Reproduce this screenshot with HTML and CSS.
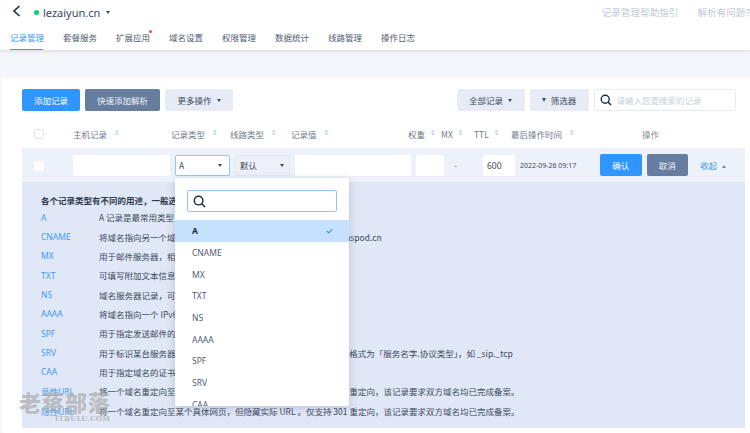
FILE: index.html
```html
<!DOCTYPE html>
<html lang="zh">
<head>
<meta charset="utf-8">
<title>记录管理</title>
<link rel="stylesheet" href="styles.css">
</head>
<body>
<div class="page">
  <header class="header">
    <div class="top">
      <svg class="back" width="8" height="12" viewBox="0 0 8 12"><path d="M6.5 1 1 6l5.5 5" fill="none" stroke="#1f2d3d" stroke-width="1.6"/></svg>
      <span class="dot"></span>
      <span class="domain">lezaiyun.cn</span>
      <span class="caret dark"></span>
      <span class="spacer"></span>
      <span class="toplink">记录管理帮助指引</span>
      <span class="toplink last">解析有问题？</span>
    </div>
    <nav class="tabs">
      <span class="tab active">记录管理</span>
      <span class="tab">套餐服务</span>
      <span class="tab badge">扩展应用</span>
      <span class="tab">域名设置</span>
      <span class="tab">权限管理</span>
      <span class="tab">数据统计</span>
      <span class="tab">线路管理</span>
      <span class="tab">操作日志</span>
    </nav>
  </header>
  <main class="main">
    <section class="card">
      <div class="toolbar">
        <span class="btn primary w58">添加记录</span>
        <span class="btn slate w76">快速添加解析</span>
        <span class="btn soft w68">更多操作<span class="caret dark"></span></span>
        <span class="spacer"></span>
        <span class="btn soft w68">全部记录<span class="caret dark"></span></span>
        <span class="btn soft w59"><span class="caret dark funnel"></span>筛选器</span>
        <div class="search">
          <svg width="12" height="12" viewBox="0 0 12 12"><circle cx="5.2" cy="5.2" r="4" fill="none" stroke="#1f2d3d" stroke-width="1.4"/><path d="m8 8 3 3" stroke="#1f2d3d" stroke-width="1.5"/></svg>
          <span>请输入您要搜索的记录</span>
        </div>
      </div>
      <div class="thead">
        <span class="check"></span>
        <span class="th c-host sort">主机记录</span>
        <span class="th c-type sort">记录类型</span>
        <span class="th c-line sort">线路类型</span>
        <span class="th c-value sort">记录值</span>
        <span class="th c-weight sort">权重</span>
        <span class="th c-mx sort">MX</span>
        <span class="th c-ttl sort">TTL</span>
        <span class="th c-time sort">最后操作时间</span>
        <span class="th c-op">操作</span>
      </div>
      <div class="editrow">
        <span class="check white"></span>
        <span class="field f-host"></span>
        <span class="field f-type focus">A<span class="caret dark"></span></span>
        <span class="field f-line grey">默认<span class="caret dark"></span></span>
        <span class="field f-value"></span>
        <span class="field f-weight"></span>
        <span class="dash">-</span>
        <span class="field f-ttl">600</span>
        <span class="time">2022-09-26 09:17</span>
        <span class="btn primary rowbtn">确认</span>
        <span class="btn slate rowbtn">取消</span>
        <span class="fold">收起<span class="caret up"></span></span>
      </div>
      <div class="detail">
        <p class="dtitle">各个记录类型有不同的用途，一般选择 A 记录或 CNAME 记录即可。</p>
        <dl class="dlist">
          <dt>A</dt><dd>A 记录是最常用类型，将域名指向一个 IPv4 地址，如 8.8.8.8</dd>
          <dt>CNAME</dt><dd>将域名指向另一个域名地址，与其有相同解析，如 https://www.dnspod.cn</dd>
          <dt>MX</dt><dd>用于邮件服务器，相关参数一般由邮件注册商提供</dd>
          <dt>TXT</dt><dd>可填写附加文本信息，常用于域名验证</dd>
          <dt>NS</dt><dd>域名服务器记录，可将指定域名交由其他 DNS 服务商解析管理</dd>
          <dt>AAAA</dt><dd>将域名指向一个 IPv6 地址，如 ff06:0:0:0:0:0:0:c3</dd>
          <dt>SPF</dt><dd>用于指定发送邮件的服务器，是一种开放的电子邮件验证系统</dd>
          <dt>SRV</dt><dd>用于标识某台服务器使用了某个服务，常见于微软系统目录管理 。 格式为「服务名字.协议类型」，如 _sip._tcp</dd>
          <dt>CAA</dt><dd>用于指定域名的证书颁发机构（CA）</dd>
          <dt>显性URL</dt><dd>将一个域名重定向至某个具体网页，并显示实际 URL 。仅支持 301 重定向，该记录要求双方域名均已完成备案。</dd>
          <dt>隐性URL</dt><dd>将一个域名重定向至某个具体网页，但隐藏实际 URL 。仅支持 301 重定向，该记录要求双方域名均已完成备案。</dd>
        </dl>
      </div>
    </section>
  </main>
  <div class="dropdown">
    <div class="ddsearch">
      <svg width="13" height="13" viewBox="0 0 13 13"><circle cx="5.6" cy="5.6" r="4.3" fill="none" stroke="#1f2d3d" stroke-width="1.4"/><path d="m8.8 8.8 3.2 3.2" stroke="#1f2d3d" stroke-width="1.6"/></svg>
    </div>
    <ul class="ddlist">
      <li class="selected">A<svg width="7" height="6" viewBox="0 0 9 7"><path d="M1 3.5 3.5 6 8 1" fill="none" stroke="#3d94f6" stroke-width="1.5"/></svg></li>
      <li>CNAME</li><li>MX</li><li>TXT</li><li>NS</li><li>AAAA</li><li>SPF</li><li>SRV</li><li>CAA</li>
    </ul>
  </div>
  <div class="watermark"><div class="wm-cn">老蒋部落</div><div class="wm-en">ITBULU.COM</div></div>
</div>
</body>
</html>
```
FILE: styles.css
```css
* { box-sizing: border-box; }
html, body { margin: 0; padding: 0; height: 433px; overflow: hidden; }
body { font-family: "Noto Sans CJK SC", "Noto Sans", sans-serif; font-size: 8.5px; color: #495770; background: #f3f6fa; }
.page { position: relative; width: 750px; height: 433px; overflow: hidden; }
.spacer { flex: 1; }

.header { height: 50px; background: #fff; box-shadow: 0 1px 3px rgba(80,100,130,.2); padding-left: 10px; }
.top { height: 28px; display: flex; align-items: center; padding-top: 1px; }
.back { margin: -7px 0 0 3px; }
.dot { width: 5px; height: 5px; border-radius: 50%; background: #0ccb7c; margin: -5px 4px 0 13px; }
.domain { font-family: "Noto Sans", sans-serif; font-size: 11px; color: #3a475c; margin-top: -5px; }
.top > .caret { margin: -5px 0 0 6px; }
.toplink { color: #c3cad5; font-size: 9.6px; margin-top: -6px; margin-right: 19px; white-space: nowrap; }
.toplink.last { margin-right: -5px; }
.tabs { display: flex; gap: 20px; height: 22px; }
.tab { position: relative; width: 33px; white-space: nowrap; line-height: 19px; color: #4f5c72; height: 22px; }
.tab.active { color: #3a97f5; border-bottom: 1px solid #3a97f5; }
.tab.badge::after { content: ""; position: absolute; width: 3px; height: 3px; border-radius: 50%; background: #f0503c; right: -3px; top: 2px; }

.caret { display: inline-block; width: 0; height: 0; border-left: 2.5px solid transparent; border-right: 2.5px solid transparent; border-top: 3.5px solid #3d4a60; }
.caret.up { border-top: 0; border-bottom: 3.5px solid #3a97f5; margin-left: 5px; vertical-align: 1px; }

.main { padding: 28px 0 0 2px; }
.card { background: #fff; height: 355px; padding: 11px 5.5px 0 20px; border-radius: 2px; }

.toolbar { display: flex; align-items: center; height: 22px; gap: 5px; padding-right: 8.5px; color: #3d4a60; }
.btn { display: flex; align-items: center; justify-content: center; height: 22px; border-radius: 2px; white-space: nowrap; }
.w58 { width: 58px; }
.w76 { width: 75px; }
.w68 { width: 68px; gap: 5px; }
.w59 { width: 59px; gap: 5px; }
.primary { background: #2f96ff; color: #fff; }
.slate { background: #677da0; color: #edf1f7; }
.soft { background: #e7ebf6; color: #3d4a60; }
.funnel { border-top-width: 4px; }
.search { width: 142.5px; height: 22px; border: 1px solid #e6eaf1; border-radius: 3px; display: flex; align-items: center; gap: 5px; padding-left: 5px; color: #c8cfda; background: #fff; }

.thead { display: flex; height: 37px; padding-top: 8px; align-items: center; }
.check { width: 10px; height: 10px; border: 1px solid #e0e5ec; border-radius: 2px; margin-left: 12px; flex: none; background: #fff; }
.check.white { border-color: #fff; margin-top: 2px; }
.th { color: #6f7b8e; white-space: nowrap; flex: none; }
.sort::after { content: ""; display: inline-block; width: 3.5px; height: 6px; margin-left: 8px; vertical-align: 2px; background: #bcd0e8; clip-path: polygon(50% 0, 100% 42%, 50% 42%, 50% 58%, 100% 58%, 50% 100%, 0 58%, 50% 58%, 50% 42%, 0 42%); }
.c-host { width: 98px; margin-left: 29px; }
.c-type { width: 59px; }
.c-line { width: 61px; }
.c-value { width: 117px; }
.c-weight { width: 33px; }
.c-mx { width: 33px; }
.c-ttl { width: 37px; }
.c-time { width: 131px; }
.c-op { color: #7d889a; }
.c-mx.sort::after, .c-ttl.sort::after, .c-weight.sort::after { margin-left: 6px; }

.editrow { display: flex; height: 34px; align-items: center; background: #edf2fa; color: #3d4a60; }
.field { height: 21px; background: #fff; border-radius: 2px; flex: none; display: flex; align-items: center; justify-content: space-between; padding: 0 7px 0 3px; }
.f-host { width: 97px; margin-left: 29px; }
.f-type { width: 55px; margin-left: 5px; }
.focus { border: 1px solid #93c5f8; }
.f-line { width: 55px; margin-left: 5px; padding: 0 5px 0 4px; }
.grey { background: #edf0f6; border: 1px solid #e4e8f0; }
.f-value { width: 116px; margin-left: 5px; }
.f-weight { width: 28px; margin-left: 5px; }
.dash { width: 39px; padding-left: 10px; color: #6f7b8e; flex: none; }
.f-ttl { width: 32px; padding-left: 4px; font-family: "Noto Sans", sans-serif; }
.time { width: 80px; margin-left: 5px; font-size: 7px; font-family: "Noto Sans", sans-serif; white-space: nowrap; flex: none; }
.rowbtn { width: 41.5px; flex: none; margin-right: 5px; }
.fold { color: #3a97f5; margin-left: 7px; white-space: nowrap; }

.detail { height: 246px; background: #e0e7f6; padding: 11px 0 0 19px; }
.dtitle { margin: 0 0 -0.5px; font-weight: 700; line-height: 15px; color: #2f3b4e; white-space: nowrap; }
.dlist { margin: 0; display: grid; grid-template-columns: 58px 1fr; grid-auto-rows: 19.35px; align-items: center; }
.dlist dt { color: #3d9af8; font-family: "Noto Sans", "Noto Sans CJK SC", sans-serif; }
.dlist dd { margin: 0; color: #3d4a60; white-space: nowrap; }

.dropdown { position: absolute; left: 175px; top: 178px; width: 174px; height: 228px; background: #fff; border-radius: 2px; box-shadow: 0 2px 8px rgba(70,90,130,.25); overflow: hidden; }
.ddsearch { height: 22px; margin: 12px 12px 8px; border: 1px solid #93c5f8; border-radius: 2px; display: flex; align-items: center; padding-left: 5px; }
.ddlist { margin: 0; padding: 0; list-style: none; }
.ddlist li { height: 21.7px; display: flex; align-items: center; justify-content: space-between; padding: 0 16px 0 17px; color: #4f5c72; font-family: "Noto Sans", sans-serif; }
.ddlist .selected { background: #c6e1fd; color: #1f2d3d; font-weight: 700; }

.watermark { position: absolute; left: 19px; top: 388px; width: 100px; pointer-events: none; }
.wm-cn { font-size: 22px; line-height: 26px; letter-spacing: 1px; font-weight: 900; color: rgba(170,170,170,.7); white-space: nowrap; }
.wm-en { font-size: 7px; line-height: 9px; font-weight: 700; letter-spacing: .3px; color: rgba(170,170,170,.75); margin-left: 36px; font-family: "DejaVu Serif", serif; white-space: nowrap; }
```
